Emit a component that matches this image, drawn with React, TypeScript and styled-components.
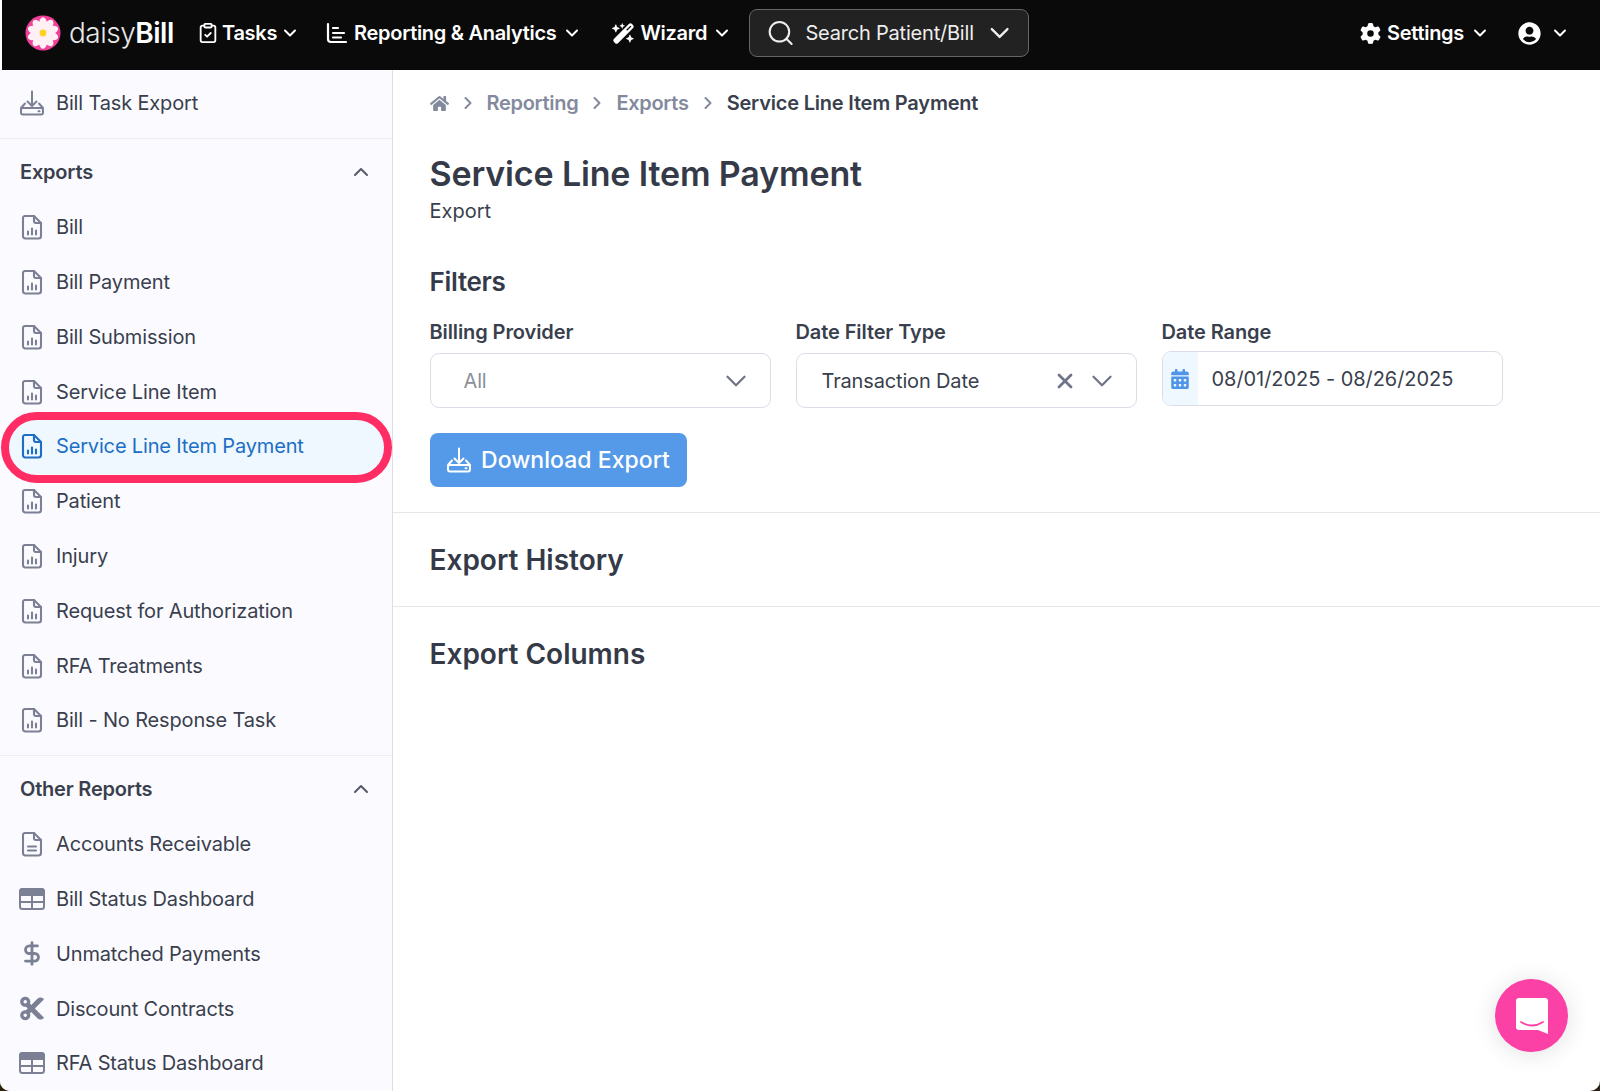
import React from 'react'
import styled, { createGlobalStyle } from 'styled-components'
import { ChevronDown, ChevronRight, ChevronUp, ClipboardCheck, DollarSign, Search, X } from 'lucide-react'
import { FaCalendarAlt, FaCut, FaHome, FaUserCircle } from 'react-icons/fa'
import { FaGear, FaWandMagicSparkles } from 'react-icons/fa6'

const GlobalStyle = createGlobalStyle`
  html, body {
    margin: 0;
    padding: 0;
    background: #2c2210;
    font-family: Inter, "Liberation Sans", sans-serif;
    overflow: hidden;
  }
`

const Page = styled.div`
  width: 1600px;
  height: 1091px;
  display: flex;
  flex-direction: column;
  background: #fff;
  overflow: hidden;
  border-radius: 0 0 10px 10px;
  position: relative;
`

const TopBar = styled.header`
  height: 70px;
  box-sizing: border-box;
  flex-shrink: 0;
  margin-left: 2px;
  background: #0a0a0a;
  display: flex;
  align-items: center;
  padding: 0 30px 4px 23px;
  color: #fff;
`

const Brand = styled.div`
  display: flex;
  align-items: center;
  gap: 8px;
  width: 172px;
`

const BrandName = styled.span`
  font-size: 28px;
  font-weight: 300;
  letter-spacing: -0.5px;
  color: #e8e8e8;
  b {
    font-weight: 600;
    color: #fff;
  }
`

const NavItem = styled.div<{ $gap?: number; $inner?: number }>`
  display: flex;
  align-items: center;
  gap: ${({ $inner }) => $inner ?? 3}px;
  font-size: 20px;
  font-weight: 600;
  letter-spacing: -0.3px;
  margin-right: ${({ $gap }) => $gap ?? 0}px;
  white-space: nowrap;
`

const SearchBox = styled.div`
  width: 280px;
  height: 48px;
  box-sizing: border-box;
  background: #222;
  border: 1px solid #666;
  border-radius: 8px;
  display: flex;
  align-items: center;
  padding: 0 13px 0 16px;
  gap: 10px;
  font-size: 20px;
  color: #eee;
  span {
    flex: 1;
    letter-spacing: -0.2px;
    white-space: nowrap;
  }
`

const Spacer = styled.div`
  flex: 1;
`

const Body = styled.div`
  flex: 1;
  display: flex;
  min-height: 0;
`

const Sidebar = styled.aside`
  width: 393px;
  flex-shrink: 0;
  box-sizing: border-box;
  background: #fbfbff;
  border-right: 1px solid #dcdde6;
  overflow: hidden;
`

const SideGroup = styled.div<{ $border?: boolean }>`
  padding: 6px 0 ${({ $border }) => ($border ? '7px' : '0')};
  border-bottom: ${({ $border }) => ($border ? '1px solid #eceef3' : 'none')};
`

const GroupHead = styled.div`
  height: 55px;
  display: flex;
  align-items: center;
  justify-content: space-between;
  padding: 0 19px 0 20px;
  font-size: 20px;
  font-weight: 600;
  letter-spacing: -0.2px;
  color: #3a3f4e;
`

const SideRow = styled.div<{ $active?: boolean }>`
  position: relative;
  height: 54.8px;
  margin: 0 6px 0 8px;
  padding-left: 11px;
  display: flex;
  align-items: center;
  gap: 11px;
  font-size: 20px;
  letter-spacing: -0.16px;
  color: ${({ $active }) => ($active ? '#1c6fc4' : '#3a3f4e')};
  background: ${({ $active }) => ($active ? '#eff7ff' : 'transparent')};
  border-radius: ${({ $active }) => ($active ? '8px' : '0')};
`

const IconSlot = styled.span<{ $color?: string }>`
  width: 26px;
  height: 26px;
  display: flex;
  align-items: center;
  justify-content: center;
  color: ${({ $color }) => $color ?? '#7b8095'};
  flex-shrink: 0;
`

const Ring = styled.div`
  position: absolute;
  left: -7px;
  right: -6px;
  top: -7px;
  bottom: -9px;
  border: 8px solid #ff2d64;
  border-radius: 36px;
  pointer-events: none;
`

const Main = styled.main`
  flex: 1;
  min-width: 0;
`

const TopSection = styled.section`
  padding: 20px 36px 25px 36.5px;
  border-bottom: 1px solid #e6e7ec;
`

const Crumbs = styled.nav`
  height: 26px;
  display: flex;
  align-items: center;
  gap: 9px;
  font-size: 20px;
  font-weight: 600;
  letter-spacing: -0.3px;
  color: #848a9d;
  margin-bottom: 37px;
  strong {
    font-weight: 600;
    letter-spacing: -0.2px;
    color: #3a3f4e;
  }
`

const Title = styled.h1`
  margin: 0;
  font-size: 34px;
  line-height: 42px;
  font-weight: 600;
  letter-spacing: -0.15px;
  color: #353a48;
`

const Sub = styled.div`
  font-size: 20px;
  line-height: 28px;
  color: #3a3f4e;
  margin-top: 2px;
`

const SectionTitle = styled.h2<{ $size?: number }>`
  margin: 0;
  font-size: ${({ $size }) => $size ?? 26}px;
  line-height: 34px;
  font-weight: 600;
  color: #353a48;
`

const FilterTitle = styled(SectionTitle)`
  margin-top: 40px;
  letter-spacing: -0.3px;
`

const Filters = styled.div`
  display: flex;
  gap: 25px;
  margin-top: 20px;
  margin-bottom: 25px;
`

const Field = styled.div`
  width: 341px;
`

const Label = styled.div`
  font-size: 20px;
  font-weight: 600;
  letter-spacing: -0.1px;
  line-height: 26px;
  color: #3a3f4e;
  margin-bottom: 8px;
`

const Select = styled.div<{ $muted?: boolean }>`
  height: 55px;
  box-sizing: border-box;
  border: 1.5px solid #dcdde6;
  border-radius: 9px;
  display: flex;
  align-items: center;
  gap: 8px;
  padding: 0 17px 0 ${({ $muted }) => ($muted ? '33px' : '25px')};
  font-size: 20px;
  letter-spacing: -0.15px;
  color: ${({ $muted }) => ($muted ? '#8c8f99' : '#3a3f4e')};
  span {
    flex: 1;
  }
`

const DateBox = styled.div`
  height: 55px;
  margin-top: -2px;
  box-sizing: border-box;
  border: 1.5px solid #dcdde6;
  border-radius: 9px;
  display: flex;
  align-items: center;
  font-size: 20px;
  letter-spacing: -0.05px;
  color: #3a3f4e;
  overflow: hidden;
`

const DateIcon = styled.div`
  width: 35px;
  height: 100%;
  background: #eff7ff;
  display: flex;
  align-items: center;
  justify-content: center;
  color: #4f96e8;
  margin-right: 14px;
`

const DownloadButton = styled.button`
  width: 257px;
  height: 54px;
  border: none;
  border-radius: 8px;
  background: #559ae9;
  color: #fff;
  font-family: inherit;
  font-size: 23px;
  font-weight: 500;
  letter-spacing: 0.05px;
  display: flex;
  align-items: center;
  justify-content: center;
  gap: 9px;
  padding: 0;
`

const FoldSection = styled.section<{ $border?: boolean }>`
  height: 94px;
  box-sizing: border-box;
  padding: 0 36px 0 36.5px;
  display: flex;
  align-items: center;
  border-bottom: ${({ $border }) => ($border ? '1px solid #e6e7ec' : 'none')};
`

const ChatBubble = styled.div`
  position: absolute;
  left: 1495px;
  top: 979px;
  width: 73px;
  height: 73px;
  border-radius: 50%;
  background: #fb41a5;
  box-shadow: 0 2px 24px rgba(0, 0, 0, 0.12);
  display: flex;
  align-items: center;
  justify-content: center;
`

const Daisy = () => (
  <svg width="36" height="36" viewBox="0 0 36 36">
    <circle cx="18" cy="18" r="17.5" fill="#f0409a" />
    {[0, 36, 72, 108, 144, 180, 216, 252, 288, 324].map(a => (
      <ellipse key={a} cx="18" cy="9" rx="4" ry="6.800" fill="#fff0f6" transform={`rotate(${a} 18 18)`} />
    ))}
    <circle cx="18" cy="18" r="3.400" fill="#ffd21f" />
  </svg>
)

const ChartIcon = () => (
  <svg width="22" height="22" viewBox="0 0 22 22" fill="none" stroke="currentColor" strokeWidth="2.200" strokeLinecap="round" strokeLinejoin="round">
    <path d="M2 2v15a3 3 0 0 0 3 3h15" />
    <path d="M7 6h5M7 11h11M7 15.500h8" />
  </svg>
)

const FileChart = () => (
  <svg width="22" height="26" viewBox="0 0 22 26" fill="none" stroke="currentColor" strokeWidth="2.100" strokeLinejoin="round" strokeLinecap="round">
    <path d="M4 2h9l7 7v13a2.500 2.500 0 0 1-2.500 2.500h-13.500A2.500 2.500 0 0 1 2 22V4a2 2 0 0 1 2-2z" />
    <path d="M13 2v5a2 2 0 0 0 2 2h5" />
    <path d="M7 20.500v-3M11 20.500v-6M15 20.500v-4" />
  </svg>
)

const FileLines = () => (
  <svg width="22" height="26" viewBox="0 0 22 26" fill="none" stroke="currentColor" strokeWidth="2.100" strokeLinejoin="round" strokeLinecap="round">
    <path d="M4 2h9l7 7v13a2.500 2.500 0 0 1-2.500 2.500h-13.500A2.500 2.500 0 0 1 2 22V4a2 2 0 0 1 2-2z" />
    <path d="M13 2v5a2 2 0 0 0 2 2h5" />
    <path d="M7 15.500h8M7 19.500h8" />
  </svg>
)

const TableIcon = () => (
  <svg width="26" height="22" viewBox="0 0 26 22" fill="none" stroke="currentColor" strokeWidth="2">
    <rect x="1" y="1" width="24" height="20" rx="2.500" />
    <path d="M1 3.500A2.500 2.500 0 0 1 3.500 1h19A2.500 2.500 0 0 1 25 3.500V7H1z" fill="currentColor" />
    <path d="M13 7v14M1 14h24" />
  </svg>
)

const Tray = ({ size = 26 }: { size?: number }) => (
  <svg width={size} height={size} viewBox="0 0 26 26" fill="none" stroke="currentColor" strokeWidth="2" strokeLinecap="round" strokeLinejoin="round">
    <path d="M13 1.500v14.500M8.500 11.500l4.500 4.500 4.500-4.500" />
    <path d="M6 13.500L2 18M20 13.500l4 4.500" />
    <rect x="2" y="18" width="22" height="6.500" rx="2" />
    <path d="M19.500 21.200h1" />
  </svg>
)

const Bubble = () => (
  <svg width="34" height="38" viewBox="0 0 34 38">
    <path d="M4 1h26a3 3 0 0 1 3 3v33l-10-4H4a3 3 0 0 1-3-3V4a3 3 0 0 1 3-3z" fill="#fff" />
    <path d="M6 25c7 4.500 15 4.500 22 0" fill="none" stroke="#fb41a5" strokeWidth="1.800" strokeLinecap="round" />
  </svg>
)

const exportsList = [
  'Bill',
  'Bill Payment',
  'Bill Submission',
  'Service Line Item',
  'Service Line Item Payment',
  'Patient',
  'Injury',
  'Request for Authorization',
  'RFA Treatments',
  'Bill - No Response Task',
]

const otherReports = [
  { label: 'Accounts Receivable', icon: <FileLines /> },
  { label: 'Bill Status Dashboard', icon: <TableIcon /> },
  { label: 'Unmatched Payments', icon: <DollarSign size={27} strokeWidth={2.6} /> },
  { label: 'Discount Contracts', icon: <FaCut size={27} /> },
  { label: 'RFA Status Dashboard', icon: <TableIcon /> },
]

export default function App() {
  return (
    <Page>
      <GlobalStyle />
      <TopBar>
        <Brand>
          <Daisy />
          <BrandName>
            daisy<b>Bill</b>
          </BrandName>
        </Brand>
        <NavItem $gap={26}>
          <ClipboardCheck size={22} />
          Tasks
          <ChevronDown size={20} strokeWidth={2.4} />
        </NavItem>
        <NavItem $gap={30} $inner={6}>
          <ChartIcon />
          Reporting &amp; Analytics
          <ChevronDown size={20} strokeWidth={2.4} />
        </NavItem>
        <NavItem $gap={17} $inner={5}>
          <FaWandMagicSparkles size={23} />
          Wizard
          <ChevronDown size={20} strokeWidth={2.4} />
        </NavItem>
        <SearchBox>
          <Search size={30} strokeWidth={1.7} />
          <span>Search Patient/Bill</span>
          <ChevronDown size={32} strokeWidth={1.8} />
        </SearchBox>
        <Spacer />
        <NavItem $gap={28} $inner={6}>
          <FaGear size={21} />
          Settings
          <ChevronDown size={20} strokeWidth={2.4} />
        </NavItem>
        <NavItem $inner={9}>
          <FaUserCircle size={23} />
          <ChevronDown size={20} strokeWidth={2.4} />
        </NavItem>
      </TopBar>
      <Body>
        <Sidebar>
          <SideGroup $border>
            <SideRow>
              <IconSlot>
                <Tray />
              </IconSlot>
              Bill Task Export
            </SideRow>
          </SideGroup>
          <SideGroup $border>
            <GroupHead>
              Exports
              <ChevronUp size={24} color="#555a6b" />
            </GroupHead>
            {exportsList.map(label => {
              const active = label === 'Service Line Item Payment'
              return (
                <SideRow key={label} $active={active}>
                  <IconSlot $color={active ? '#1c6fc4' : undefined}>
                    <FileChart />
                  </IconSlot>
                  {label}
                  {active && <Ring />}
                </SideRow>
              )
            })}
          </SideGroup>
          <SideGroup>
            <GroupHead>
              Other Reports
              <ChevronUp size={24} color="#555a6b" />
            </GroupHead>
            {otherReports.map(r => (
              <SideRow key={r.label}>
                <IconSlot>{r.icon}</IconSlot>
                {r.label}
              </SideRow>
            ))}
          </SideGroup>
        </Sidebar>
        <Main>
          <TopSection>
            <Crumbs>
              <FaHome size={19} />
              <ChevronRight size={20} strokeWidth={2.4} />
              Reporting
              <ChevronRight size={20} strokeWidth={2.4} />
              Exports
              <ChevronRight size={20} strokeWidth={2.4} />
              <strong>Service Line Item Payment</strong>
            </Crumbs>
            <Title>Service Line Item Payment</Title>
            <Sub>Export</Sub>
            <FilterTitle>Filters</FilterTitle>
            <Filters>
              <Field>
                <Label>Billing Provider</Label>
                <Select $muted>
                  <span>All</span>
                  <ChevronDown size={34} color="#6f7488" strokeWidth={1.6} />
                </Select>
              </Field>
              <Field>
                <Label>Date Filter Type</Label>
                <Select>
                  <span>Transaction Date</span>
                  <X size={24} color="#6f7488" strokeWidth={2.8} />
                  <ChevronDown size={34} color="#6f7488" strokeWidth={1.6} />
                </Select>
              </Field>
              <Field>
                <Label>Date Range</Label>
                <DateBox>
                  <DateIcon>
                    <FaCalendarAlt size={20} />
                  </DateIcon>
                  08/01/2025 - 08/26/2025
                </DateBox>
              </Field>
            </Filters>
            <DownloadButton>
              <Tray size={26} />
              Download Export
            </DownloadButton>
          </TopSection>
          <FoldSection $border>
            <SectionTitle $size={28}>Export History</SectionTitle>
          </FoldSection>
          <FoldSection>
            <SectionTitle $size={28}>Export Columns</SectionTitle>
          </FoldSection>
        </Main>
      </Body>
      <ChatBubble>
        <Bubble />
      </ChatBubble>
    </Page>
  )
}
